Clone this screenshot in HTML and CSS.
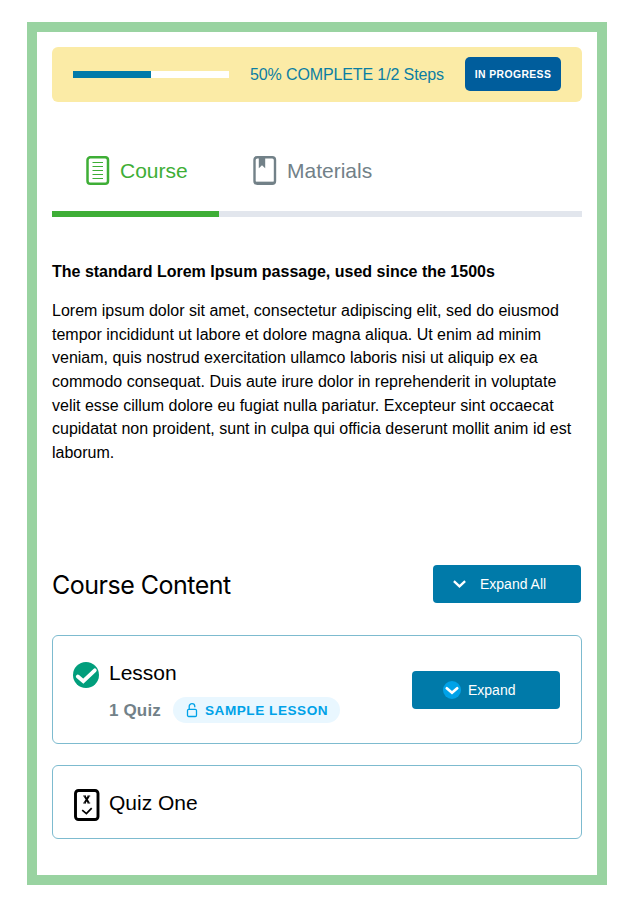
FILE: index.html
```html
<!DOCTYPE html>
<html lang="en">
<head>
<meta charset="utf-8">
<title>Course</title>
<link rel="stylesheet" href="styles.css">
</head>
<body>
<main class="course">
  <section class="status">
    <div class="progress"><div class="progress-fill" style="width:50%"></div></div>
    <div class="status-text">50% COMPLETE 1/2 Steps</div>
    <div class="status-badge">IN PROGRESS</div>
  </section>

  <nav class="tabs">
    <a class="tab tab-active">
      <svg class="tab-icon" viewBox="0 0 24 30" fill="none" stroke="currentColor">
        <rect x="1.500" y="1.200" width="20.500" height="26.500" rx="2.800" stroke-width="2.500"/>
        <path d="M6.500 6.500h10.500M6.500 10.500h10.500M6.500 14.500h10.500M6.500 18.500h10.500M6.500 22.500h10.500" stroke-width="1.200"/>
      </svg>
      <span>Course</span>
    </a>
    <a class="tab">
      <svg class="tab-icon" viewBox="0 0 24 30" fill="none" stroke="currentColor">
        <rect x="1.500" y="1.200" width="20.500" height="26.500" rx="2.800" stroke-width="2.400"/>
        <path d="M2 26.400h19.500" stroke-width="1.500"/>
        <path d="M5.800 1.500h6.400v10.800l-3.200-3-3.200 3z" fill="currentColor" stroke="none"/>
      </svg>
      <span>Materials</span>
    </a>
  </nav>

  <article class="intro">
    <h3>The standard Lorem Ipsum passage, used since the 1500s</h3>
    <p>Lorem ipsum dolor sit amet, consectetur adipiscing elit, sed do eiusmod<br>tempor incididunt ut labore et dolore magna aliqua. Ut enim ad minim<br>veniam, quis nostrud exercitation ullamco laboris nisi ut aliquip ex ea<br>commodo consequat. Duis aute irure dolor in reprehenderit in voluptate<br>velit esse cillum dolore eu fugiat nulla pariatur. Excepteur sint occaecat<br>cupidatat non proident, sunt in culpa qui officia deserunt mollit anim id est<br>laborum.</p>
  </article>

  <header class="content-head">
    <h2>Course Content</h2>
    <button class="button button-all">
      <svg class="chevron" viewBox="0 0 13 8"><path d="M.9 1.200 6.500 6.400l5.600-5.200"/></svg>
      <span>Expand All</span>
    </button>
  </header>

  <section class="card lesson">
    <svg class="done" viewBox="0 0 26 26">
      <circle cx="13" cy="13" r="13" fill="#019e7c"/>
      <path d="M4.800 14.500 10.300 19.200 21.800 8.300" fill="none" stroke="#fff" stroke-width="3.800" stroke-linecap="round"/>
    </svg>
    <div class="lesson-body">
      <div class="card-title">Lesson</div>
      <div class="meta">
        <span class="quiz-count">1 Quiz</span>
        <span class="sample">
          <svg class="lock" viewBox="0 0 12 15" fill="none" stroke="currentColor" stroke-width="1.300">
            <rect x="1.500" y="6.300" width="9" height="7.200" rx="1.200"/>
            <path d="M3.200 6.300V3.500a2.800 2.800 0 0 1 5.600 0v.7"/>
          </svg>
          <span>SAMPLE LESSON</span>
        </span>
      </div>
    </div>
    <button class="button button-one">
      <svg class="round-chevron" viewBox="0 0 18 18">
        <circle cx="9" cy="9" r="9" fill="#00a2e8"/>
        <path d="M3.800 7.300 9 11.800l5.200-4.500" fill="none" stroke="#fff" stroke-width="2.700" stroke-linecap="round"/>
      </svg>
      <span>Expand</span>
    </button>
  </section>

  <section class="card quiz">
    <svg class="quiz-icon" viewBox="0 0 26 32" fill="none" stroke="#000">
      <rect x="1.500" y="1.500" width="22.500" height="29" rx="3" stroke-width="2.900"/>
      <path d="M10.700 7.200l4 6.600M14.700 7.200l-4 6.600" stroke-width="2"/>
      <path d="M9.200 7H12M13.500 7h2.700M9.200 14H12M13.500 14h2.700" stroke-width="1.100"/>
      <path d="M8.200 21.200l4.200 3.500 5.300-5.600" stroke-width="1.700"/>
    </svg>
    <div class="card-title">Quiz One</div>
  </section>
</main>
</body>
</html>
```

FILE: styles.css
```css
* { box-sizing: border-box; }
body {
  margin: 0;
  padding: 22px 31px 16px 27px;
  background: #fff;
  color: #000;
  font-family: "Liberation Sans", Arial, sans-serif;
}
h2, h3, p { margin: 0; }
svg { display: block; flex: none; }
.course {
  height: 863px;
  border: 10px solid #99d3a1;
  padding: 15px;
}
.status {
  display: flex;
  align-items: flex-start;
  height: 55px;
  padding: 10px 21px 0;
  border-radius: 6px;
  background: #fbeba6;
}
.progress { width: 156px; height: 7px; margin-top: 14px; background: #fff; }
.progress-fill { height: 100%; background: #007aa9; }
.status-text {
  width: 215px;
  margin-left: 21px;
  color: #0b7ea3;
  font-size: 16px;
  letter-spacing: -0.12px;
  line-height: 35px;
  white-space: nowrap;
}
.status-badge {
  width: 96px;
  height: 34px;
  border-radius: 5px;
  background: #005d9c;
  color: #fff;
  font-size: 10.400px;
  font-weight: bold;
  letter-spacing: 0.400px;
  line-height: 35px;
  text-align: center;
  white-space: nowrap;
}
.tabs {
  display: flex;
  height: 83px;
  margin-top: 32px;
  box-shadow: inset 0 -6px #e2e6ed;
}
.tab {
  display: flex;
  align-items: flex-start;
  gap: 10px;
  padding: 22px 32px 0 34px;
  color: #728188;
  font-size: 21px;
  line-height: 30px;
}
.tab-active {
  width: 167px;
  border-bottom: 6px solid #3eae36;
  color: #3eae36;
}
.tab-icon { width: 24px; height: 30px; }
.intro {
  height: 348px;
  padding-top: 45px;
  font-size: 16px;
  line-height: 23.680px;
}
.intro h3 {
  font-size: 16px;
  line-height: 20px;
}
.intro p { margin-top: 17px; white-space: nowrap; }
.content-head {
  display: flex;
  align-items: center;
  justify-content: space-between;
  height: 38px;
  padding-right: 1px;
}
.content-head h2 {
  padding-top: 2px;
  font: 400 25px/38px Inter, sans-serif;
  letter-spacing: -0.5px;
}
.button {
  display: flex;
  align-items: center;
  width: 148px;
  height: 38px;
  padding: 0;
  border: 0;
  border-radius: 4px;
  background: #007aa9;
  color: #fff;
  font: 14px/38px "Liberation Sans", Arial, sans-serif;
  white-space: nowrap;
}
.button-all { gap: 14px; padding-left: 20px; }
.chevron {
  width: 13px;
  height: 8px;
  fill: none;
  stroke: #fff;
  stroke-width: 2.300;
}
.card {
  display: flex;
  border: 1px solid #7dbbcf;
  border-radius: 6px;
}
.lesson {
  height: 109px;
  margin-top: 32px;
  padding: 0 21px 0 20px;
}
.done { width: 26px; height: 26px; margin-top: 26px; }
.lesson-body { flex: 1; margin: 24px 0 0 10px; }
.card-title { font-size: 21px; line-height: 26px; }
.meta { display: flex; align-items: center; gap: 12px; margin-top: 11px; }
.quiz-count {
  width: 52px;
  color: #728188;
  font-size: 17px;
  font-weight: bold;
  letter-spacing: 0.150px;
  line-height: 25px;
}
.sample {
  display: flex;
  align-items: center;
  gap: 7px;
  width: 167px;
  height: 26px;
  padding: 1px 0 0 13px;
  border-radius: 13px;
  background: #e9f7ff;
  color: #00a2e8;
  font-size: 13.600px;
  font-weight: bold;
  letter-spacing: 0.520px;
  white-space: nowrap;
}
.lock { width: 12px; height: 15px; }
.button-one { gap: 7px; margin-top: 35px; padding-left: 31px; }
.round-chevron { width: 18px; height: 18px; }
.quiz {
  height: 74px;
  margin-top: 21px;
  padding: 23px 20px 0 21px;
}
.quiz-icon { width: 26px; height: 32px; }
.quiz .card-title { margin: 1px 0 0 9px; }
```
